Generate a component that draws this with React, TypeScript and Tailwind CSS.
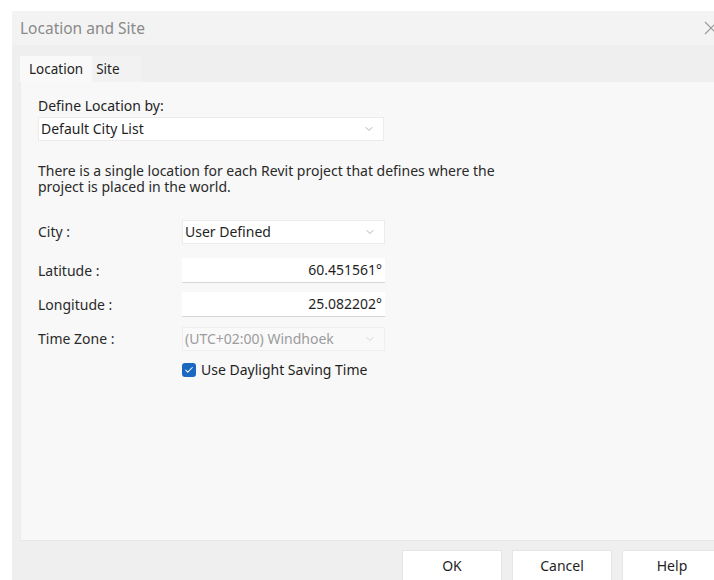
import { ChevronDown, Check } from "lucide-react";

const font = { fontFamily: '"Noto Sans", "Open Sans", sans-serif' };

function Select({ value, disabled, className }: { value: string; disabled?: boolean; className?: string }) {
  return (
    <div
      className={`flex h-[24px] items-center justify-between pl-[2px] pr-[8px] ${
        disabled ? "bg-[#f9f9f9] text-[#9c9c9c] border border-[#efefef]" : "bg-white text-[#1f1f1f] border border-[#ececec]"
      } ${className ?? ""}`}
    >
      <span>{value}</span>
      <ChevronDown className={disabled ? "h-3 w-3 text-[#c8c8c8]" : "h-3 w-3 text-[#9a9a9a]"} strokeWidth={1.5} />
    </div>
  );
}

function NumberField({ value }: { value: string }) {
  return (
    <div className="flex h-[25px] w-[203px] items-center justify-end border-b border-b-[#d6d6d6] bg-white pr-[3px] text-[#1f1f1f]">
      {value}
    </div>
  );
}

function Row({ label, className, children }: { label: string; className?: string; children: React.ReactNode }) {
  return (
    <div className={`flex items-center ${className ?? ""}`}>
      <div className="w-[144px] text-[#2a2a2a]">{label}</div>
      {children}
    </div>
  );
}

export default function App() {
  return (
    <div className="h-[580px] w-[714px] overflow-hidden bg-white pl-[12px] pt-[11px] text-[14px] leading-[16px]" style={font}>
      <div className="flex h-full flex-col bg-[#efefef]">
        {/* title bar */}
        <div className="flex h-[34px] shrink-0 items-center justify-between bg-[#f3f3f3] pl-[8px] pr-0">
          <span className="text-[15.5px] text-[#8a8a8a]">Location and Site</span>
          <svg width="12" height="14" viewBox="0 0 12 14" className="mr-[-2px]">
            <path d="M1 1 L13 13 M13 1 L1 13" stroke="#9a9a9a" strokeWidth="1.2" fill="none" />
          </svg>
        </div>

        {/* tabs */}
        <div className="flex h-[37px] shrink-0 items-end pl-[8px]">
          <div className="flex h-[26px] items-center bg-[#f9f9f9] px-[9px] text-[13.5px] text-[#1f1f1f]">Location</div>
          <div className="flex h-[26px] items-center bg-[#f2f2f2] pl-[4px] pr-[22px] text-[13.5px] text-[#1f1f1f]">Site</div>
        </div>

        {/* tab page */}
        <div className="ml-[8px] flex-1 bg-[#f8f8f8] pl-[18px] pt-[16px] shadow-[inset_1px_0_0_#ebebeb,0_1px_0_#e8e8e8]">
          <div className="text-[#1f1f1f]">Define Location by:</div>
          <Select value="Default City List" className="mt-[3px] w-[346px]" />

          <p className="mt-[22px] w-[470px] text-[#2a2a2a]">
            There is a single location for each Revit project that defines where the project is placed in the world.
          </p>

          <Row label="City :" className="mt-[25px]">
            <Select value="User Defined" className="w-[203px]" />
          </Row>
          <Row label="Latitude :" className="mt-[14px]">
            <NumberField value="60.451561°" />
          </Row>
          <Row label="Longitude :" className="mt-[9px]">
            <NumberField value="25.082202°" />
          </Row>
          <Row label="Time Zone :" className="mt-[10px]">
            <Select value="(UTC+02:00) Windhoek" disabled className="w-[203px]" />
          </Row>

          <div className="ml-[144px] mt-[11px] flex items-center gap-[5px] text-[#1f1f1f]">
            <span className="flex h-[14px] w-[14px] items-center justify-center rounded-[3px] bg-[#1a68c0]">
              <Check className="h-[10px] w-[10px] text-white" strokeWidth={2.5} />
            </span>
            <span>Use Daylight Saving Time</span>
          </div>
        </div>

        {/* buttons */}
        <div className="flex h-[40px] shrink-0 justify-end gap-[10px] pt-[10px]">
          {["OK", "Cancel", "Help"].map((b) => (
            <div
              key={b}
              className={`flex h-[32px] w-[100px] shrink-0 items-center justify-center border border-[#e6e6e6] bg-white text-[#1f1f1f] ${
                b === "Help" ? "mr-[-8px]" : ""
              }`}
            >
              {b}
            </div>
          ))}
        </div>
      </div>
    </div>
  );
}
